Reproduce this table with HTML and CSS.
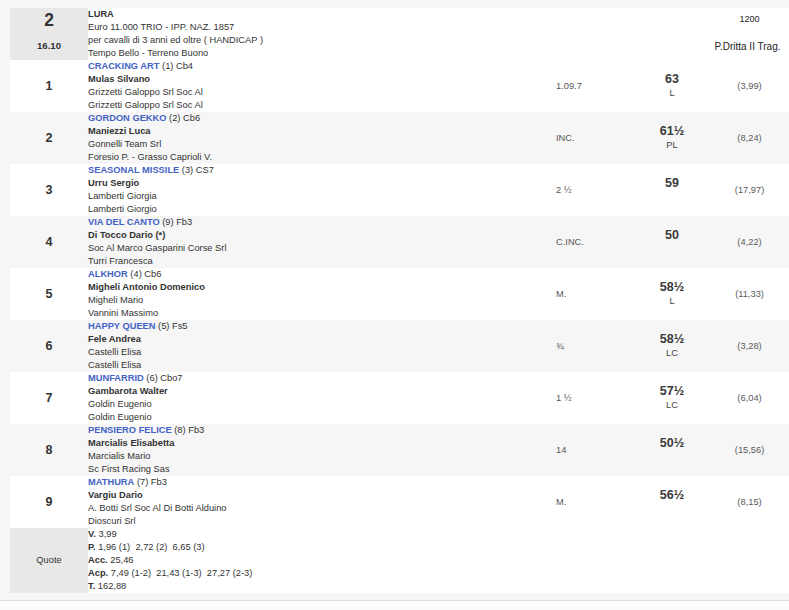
FILE: index.html
```html
<!DOCTYPE html>
<html lang="it">
<head>
<meta charset="utf-8">
<title>Corsa 2 - LURA</title>
<link rel="stylesheet" href="styles.css">
</head>
<body>
<div class="wrap">
<table class="race">
  <colgroup>
    <col class="c-num"><col class="c-name"><col class="c-time"><col class="c-weight"><col class="c-odds">
  </colgroup>
  <tr class="head">
    <td class="side"><div class="race-no">2</div><div class="race-time">16.10</div></td>
    <td colspan="3" class="info">
      <div class="b">LURA</div>
      <div>Euro 11.000 TRIO - IPP. NAZ. 1857</div>
      <div>per cavalli di 3 anni ed oltre ( HANDICAP )</div>
      <div>Tempo Bello - Terreno Buono</div>
    </td>
    <td class="dist"><div class="d1">1200</div><div class="d2">P.Dritta II Trag.</div></td>
  </tr>
  <tr class="row">
    <td class="pos">1</td>
    <td class="info"><div><span class="horse">CRACKING ART</span> (1) Cb4</div><div class="b">Mulas Silvano</div><div>Grizzetti Galoppo Srl Soc Al</div><div>Grizzetti Galoppo Srl Soc Al</div></td>
    <td class="time">1.09.7</td>
    <td class="weight"><div class="kg">63</div><div class="sur">L</div></td>
    <td class="odds">(3,99)</td>
  </tr>
  <tr class="row alt">
    <td class="pos">2</td>
    <td class="info"><div><span class="horse">GORDON GEKKO</span> (2) Cb6</div><div class="b">Maniezzi Luca</div><div>Gonnelli Team Srl</div><div>Foresio P. - Grasso Caprioli V.</div></td>
    <td class="time">INC.</td>
    <td class="weight"><div class="kg">61½</div><div class="sur">PL</div></td>
    <td class="odds">(8,24)</td>
  </tr>
  <tr class="row">
    <td class="pos">3</td>
    <td class="info"><div><span class="horse">SEASONAL MISSILE</span> (3) CS7</div><div class="b">Urru Sergio</div><div>Lamberti Giorgia</div><div>Lamberti Giorgio</div></td>
    <td class="time">2 ½</td>
    <td class="weight"><div class="kg">59</div><div class="sur">&nbsp;</div></td>
    <td class="odds">(17,97)</td>
  </tr>
  <tr class="row alt">
    <td class="pos">4</td>
    <td class="info"><div><span class="horse">VIA DEL CANTO</span> (9) Fb3</div><div class="b">Di Tocco Dario (*)</div><div>Soc Al Marco Gasparini Corse Srl</div><div>Turri Francesca</div></td>
    <td class="time">C.INC.</td>
    <td class="weight"><div class="kg">50</div><div class="sur">&nbsp;</div></td>
    <td class="odds">(4,22)</td>
  </tr>
  <tr class="row">
    <td class="pos">5</td>
    <td class="info"><div><span class="horse">ALKHOR</span> (4) Cb6</div><div class="b">Migheli Antonio Domenico</div><div>Migheli Mario</div><div>Vannini Massimo</div></td>
    <td class="time">M.</td>
    <td class="weight"><div class="kg">58½</div><div class="sur">L</div></td>
    <td class="odds">(11,33)</td>
  </tr>
  <tr class="row alt">
    <td class="pos">6</td>
    <td class="info"><div><span class="horse">HAPPY QUEEN</span> (5) Fs5</div><div class="b">Fele Andrea</div><div>Castelli Elisa</div><div>Castelli Elisa</div></td>
    <td class="time">¾</td>
    <td class="weight"><div class="kg">58½</div><div class="sur">LC</div></td>
    <td class="odds">(3,28)</td>
  </tr>
  <tr class="row">
    <td class="pos">7</td>
    <td class="info"><div><span class="horse">MUNFARRID</span> (6) Cbo7</div><div class="b">Gambarota Walter</div><div>Goldin Eugenio</div><div>Goldin Eugenio</div></td>
    <td class="time">1 ½</td>
    <td class="weight"><div class="kg">57½</div><div class="sur">LC</div></td>
    <td class="odds">(6,04)</td>
  </tr>
  <tr class="row alt">
    <td class="pos">8</td>
    <td class="info"><div><span class="horse">PENSIERO FELICE</span> (8) Fb3</div><div class="b">Marcialis Elisabetta</div><div>Marcialis Mario</div><div>Sc First Racing Sas</div></td>
    <td class="time">14</td>
    <td class="weight"><div class="kg">50½</div><div class="sur">&nbsp;</div></td>
    <td class="odds">(15,56)</td>
  </tr>
  <tr class="row">
    <td class="pos">9</td>
    <td class="info"><div><span class="horse">MATHURA</span> (7) Fb3</div><div class="b">Vargiu Dario</div><div>A. Botti Srl Soc Al Di Botti Alduino</div><div>Dioscuri Srl</div></td>
    <td class="time">M.</td>
    <td class="weight"><div class="kg">56½</div><div class="sur">&nbsp;</div></td>
    <td class="odds">(8,15)</td>
  </tr>
  <tr class="quote">
    <td class="side q">Quote</td>
    <td colspan="4" class="info">
      <div><span class="b">V.</span> 3,99</div>
      <div><span class="b">P.</span> 1,96 (1)&nbsp; 2,72 (2)&nbsp; 6,65 (3)</div>
      <div><span class="b">Acc.</span> 25,46</div>
      <div><span class="b">Acp.</span> 7,49 (1-2)&nbsp; 21,43 (1-3)&nbsp; 27,27 (2-3)</div>
      <div><span class="b">T.</span> 162,88</div>
    </td>
  </tr>
</table>
</div>
</body>
</html>
```
FILE: styles.css
```css
html, body {
  margin: 0;
  padding: 0;
  background: #fcfcfc;
}
body {
  font-family: "Liberation Sans", Arial, sans-serif;
  font-size: 9.3px;
  line-height: 13px;
  color: #333;
}
.wrap {
  background: #f6f6f6;
  padding: 8px 0 7px 10px;
  border-bottom: 1px solid #dedede;
}
.race {
  border-collapse: collapse;
  width: 779px;
  table-layout: fixed;
}
.race td {
  padding: 0;
  vertical-align: middle;
}
.c-num { width: 78px; }
.c-name { width: 462px; }
.c-time { width: 86px; }
.c-weight { width: 72px; }
.c-odds { width: 81px; }

.head, .row, .quote { background: #fff; }
.row.alt { background: #f6f6f6; }

.side {
  background: #e8e8e8;
  text-align: center;
}
.head .side { vertical-align: top; }
.race-no {
  font-size: 17.5px;
  font-weight: bold;
  line-height: 22px;
  padding-top: 1px;
}
.race-time {
  font-weight: bold;
  font-size: 9.6px;
  line-height: 13px;
  margin-top: 8px;
}
.info { vertical-align: top; }
.b { font-weight: bold; }
.horse {
  color: #4462c4;
  font-weight: bold;
}
.pos {
  text-align: center;
  font-weight: bold;
  font-size: 12.5px;
}
.race td.time {
  padding-left: 6px;
  color: #555;
}
.weight {
  text-align: center;
}
.kg {
  font-size: 12.5px;
  line-height: 15px;
  font-weight: bold;
  color: #3a3a3a;
}
.sur { color: #444; }
.race td.odds {
  text-align: center;
  color: #5a5a5a;
  padding-left: 2px;
}
.race td.dist {
  vertical-align: top;
  text-align: center;
  color: #222;
  padding-top: 5px;
}
.d1 { font-size: 9px; padding-left: 2px; }
.d2 { margin-top: 14px; font-size: 10px; white-space: nowrap; padding-right: 2px; }
.q { color: #333; }
```
